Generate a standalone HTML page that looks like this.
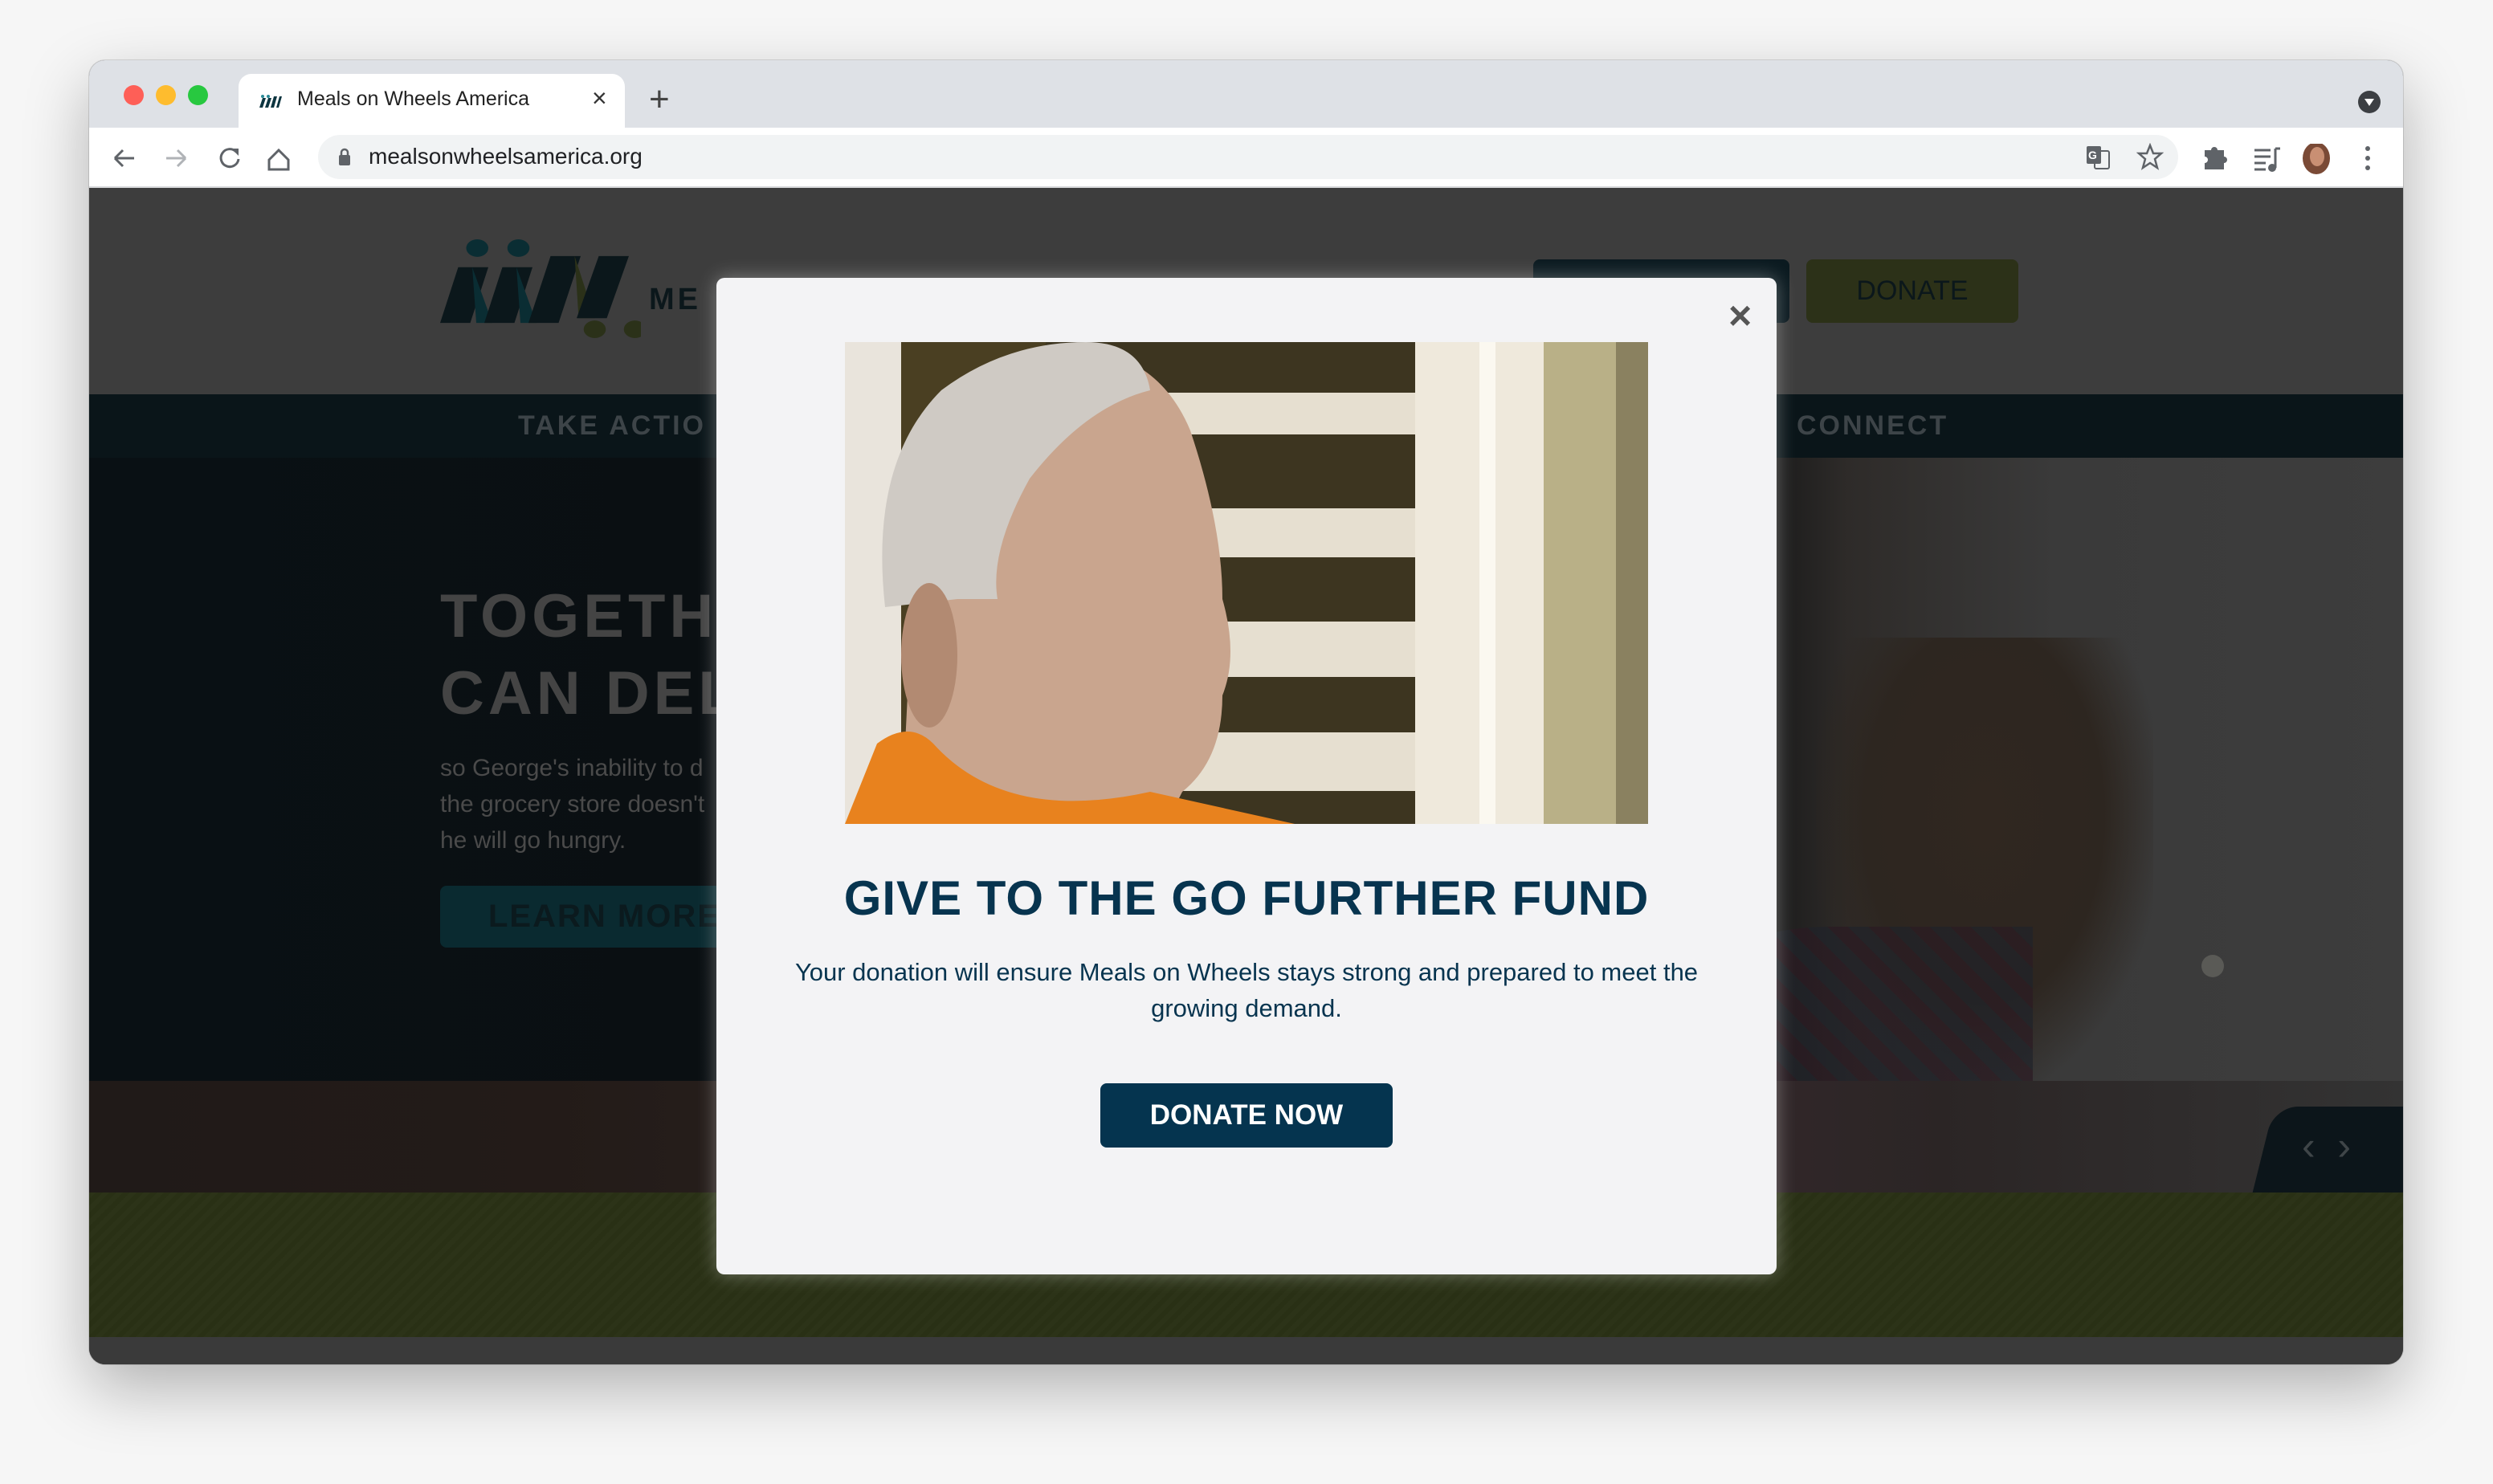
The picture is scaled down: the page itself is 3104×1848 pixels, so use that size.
<!DOCTYPE html>
<html><head><meta charset="utf-8">
<style>
*{margin:0;padding:0;box-sizing:border-box}
body{width:3104px;height:1848px;background:#f6f6f6;font-family:"Liberation Sans",sans-serif;position:relative;overflow:hidden}
.win{position:absolute;left:111px;top:75px;width:2881px;height:1624px;border-radius:20px;overflow:hidden;box-shadow:0 30px 80px rgba(0,0,0,.28),0 0 0 1px rgba(0,0,0,.12);background:#3c3c3c}
.tabbar{position:absolute;left:0;top:0;width:100%;height:84px;background:#dee1e6}
.dot{position:absolute;top:31px;width:25px;height:25px;border-radius:50%}
.tab{position:absolute;left:186px;top:17px;width:481px;height:68px;background:#fff;border-radius:16px 16px 0 0}
.toolbar{position:absolute;left:0;top:84px;width:100%;height:75px;background:#fff;border-bottom:2px solid #d7d8db}
.omni{position:absolute;left:285px;top:9px;width:2316px;height:55px;background:#f1f3f4;border-radius:28px}
.abs{position:absolute}
.content{position:absolute;left:0;top:159px;width:100%;height:1465px;background:#3d3d3d}
</style></head><body>
<div class="win">
 <div class="tabbar">
  <div class="dot" style="left:43px;background:#fe5f57"></div>
  <div class="dot" style="left:83px;background:#febc2e"></div>
  <div class="dot" style="left:123px;background:#28c840"></div>
  <div class="tab">
   <svg class="abs" style="left:24px;top:26px" width="30" height="16" viewBox="0 0 30 16"><path d="M2 16L6 4h4L6 16zM9 16l4-12h4l-4 12zM16 16l4-14h4l-4 14zM23 16l4-14h3l-4 14z" fill="#0d3540"/><circle cx="6" cy="2" r="2" fill="#2a8a96"/><circle cx="13" cy="2" r="2" fill="#2a8a96"/></svg>
   <div class="abs" style="left:73px;top:17px;font-size:25px;color:#222">Meals on Wheels America</div>
   <div class="abs" style="left:440px;top:12px;font-size:32px;color:#333">×</div>
  </div>
  <div class="abs" style="left:697px;top:24px;font-size:44px;color:#444;font-weight:300">+</div>
  <div class="abs" style="left:2825px;top:38px;width:28px;height:28px;border-radius:50%;background:#3c3f43"><svg width="28" height="28"><path d="M8 10h12l-6 9z" fill="#fff"/></svg></div>
 </div>
 <div class="toolbar">
  <svg class="abs" style="left:28px;top:20px" width="300" height="36" viewBox="0 0 300 36" fill="none" stroke-width="3">
   <path d="M4 18h24M4 18l10-10M4 18l10 10" stroke="#5f6368"/>
   <path d="M92 18h-24M92 18l-10-10M92 18l-10 10" stroke="#b0b3b7"/>
   <path d="M155 10a11 11 0 1 0 3 9" stroke="#5f6368"/><path d="M149 6h9v9z" fill="#5f6368" stroke="none"/>
   <path d="M196 20l12-12 12 12v12h-24z" stroke="#5f6368"/>
  </svg>
  <div class="omni">
   <svg class="abs" style="left:25px;top:15px" width="16" height="24"><rect x="1" y="10" width="14" height="13" rx="2" fill="#5f6368"/><path d="M4 10V7a4 4 0 0 1 8 0v3" stroke="#5f6368" stroke-width="2.5" fill="none"/></svg>
   <div class="abs" style="left:63px;top:11px;font-size:28px;color:#202124">mealsonwheelsamerica.org</div>
   <svg class="abs" style="left:2200px;top:12px" width="34" height="32"><rect x="2" y="2" width="18" height="22" rx="2" fill="#5f6368"/><rect x="12" y="8" width="18" height="22" rx="2" fill="none" stroke="#5f6368" stroke-width="2"/><text x="4" y="18" font-size="14" fill="#fff" font-family="Liberation Sans" font-weight="bold">G</text></svg>
   <svg class="abs" style="left:2264px;top:10px" width="34" height="34"><path d="M17 3l4 10h10l-8 7 3 11-9-6-9 6 3-11-8-7h10z" fill="none" stroke="#5f6368" stroke-width="2.5"/></svg>
  </div>
  <svg class="abs" style="left:2630px;top:20px" width="340" height="40">
   <path d="M4 12h8a4 4 0 0 1 8 0h8v8a4 4 0 0 1 0 8v8H4v-8a4 4 0 0 0 0-8z" fill="#5f6368" transform="translate(0,-4)"/>
   <path d="M66 8h20M66 16h20M66 24h14M66 32h14" stroke="#5f6368" stroke-width="3"/><path d="M92 6v24" stroke="#5f6368" stroke-width="3"/><circle cx="88" cy="30" r="5" fill="#5f6368"/><path d="M92 6h6" stroke="#5f6368" stroke-width="3"/>
   <ellipse cx="143" cy="18" rx="17" ry="20" fill="#7a4a36"/><ellipse cx="144" cy="16" rx="9" ry="12" fill="#c98f73"/>
   <circle cx="207" cy="6" r="3" fill="#5f6368"/><circle cx="207" cy="18" r="3" fill="#5f6368"/><circle cx="207" cy="30" r="3" fill="#5f6368"/>
  </svg>
 </div>
 <div class="content">
  <svg class="abs" style="left:437px;top:63px" width="250" height="125" viewBox="548 294 200 126" preserveAspectRatio="none">
   <circle cx="585" cy="306" r="11" fill="#0a2d33"/><circle cx="626" cy="306" r="11" fill="#0a2d33"/>
   <path d="M548 400l18-70h30l-18 70z" fill="#0b171b"/>
   <path d="M580 330l20 70h-16z" fill="#0a2d33"/>
   <path d="M592 400l18-70h30l-18 70z" fill="#0b171b"/>
   <path d="M624 330l20 70h-16z" fill="#0a2d33"/>
   <path d="M636 400l22-84h30l-22 84z" fill="#0b171b"/>
   <path d="M682 316l20 78h-16z" fill="#2b3119"/>
   <path d="M684 394l22-78h30l-22 78z" fill="#0b171b"/>
   <circle cx="702" cy="408" r="11" fill="#2b3119"/><circle cx="742" cy="408" r="11" fill="#2b3119"/>
  </svg>
  <div class="abs" style="left:697px;top:118px;font-size:38px;font-weight:bold;color:#0b171b;letter-spacing:4px">ME</div>
  <div class="abs" style="left:1798px;top:89px;width:319px;height:79px;background:#0b1a20;border-radius:8px"></div>
  <div class="abs" style="left:2138px;top:89px;width:264px;height:79px;background:#2c3118;border-radius:8px;color:#0b171b;font-size:34px;text-align:center;line-height:79px">DONATE</div>
  <div class="abs" style="left:0;top:257px;width:100%;height:79px;background:#0a1519"></div>
  <div class="abs" style="left:534px;top:277px;font-size:34px;color:#3d4448;letter-spacing:3px;font-weight:bold">TAKE ACTIO</div>
  <div class="abs" style="left:2126px;top:277px;font-size:34px;color:#3d4448;letter-spacing:3px;font-weight:bold">CONNECT</div>
  <div class="abs" style="left:0;top:336px;width:100%;height:776px;background:linear-gradient(90deg,#091014 0%,#0a0f12 30%,#0b0e10 70%,#2e2b29 76%,#3a3a3a 85%,#3d3d3d 100%)"></div>
  <div class="abs" style="left:2150px;top:560px;width:420px;height:552px;background:radial-gradient(ellipse at 50% 40%,#302720 0%,#2d2620 50%,rgba(60,60,60,0) 75%)"></div>
  <div class="abs" style="left:2000px;top:920px;width:420px;height:192px;background:repeating-linear-gradient(45deg,#2a1a22 0 18px,#1f2229 18px 36px);opacity:.7;border-radius:40% 0 0 0"></div>
  <div class="abs" style="left:2630px;top:955px;width:28px;height:28px;border-radius:50%;background:#5a5a56"></div>
  <div class="abs" style="left:437px;top:486px;font-size:76px;line-height:96px;color:#444;font-weight:bold;letter-spacing:5px">TOGETH<br>CAN DEL</div>
  <div class="abs" style="left:437px;top:700px;font-size:30px;line-height:45px;color:#4a4a4a">so George's inability to d<br>the grocery store doesn't<br>he will go hungry.</div>
  <div class="abs" style="left:437px;top:869px;width:400px;height:77px;background:#0a2a30;border-radius:8px;color:#0b1a1e;font-size:40px;font-weight:bold;line-height:77px;padding-left:60px;letter-spacing:2px">LEARN MORE</div>
  <div class="abs" style="left:0;top:1112px;width:100%;height:139px;background:linear-gradient(90deg,#201a18,#231b18 20%,#2a2220 40%,#3b2a30 60%,#2b2525 80%,#333)"></div>
  <div class="abs" style="left:2707px;top:1144px;width:200px;height:107px;background:#0c151a;border-radius:30px 0 0 0;transform:skewX(-14deg)"></div>
  <div class="abs" style="left:2885px;top:1144px;width:100px;height:107px;background:#0c151a"></div>
  <div class="abs" style="left:2755px;top:1164px;font-size:50px;color:#3f4548">‹&nbsp;&nbsp;›</div>
  <div class="abs" style="left:0;top:1251px;width:100%;height:180px;background:repeating-linear-gradient(135deg,#2c3318 0 6px,#293015 6px 12px)"></div>
  <div class="abs" style="left:0;top:1431px;width:100%;height:40px;background:#3a3a3a"></div>
 </div>
</div>
<div class="abs" style="left:892px;top:346px;width:1320px;height:1241px;background:#f3f3f5;border-radius:10px;box-shadow:0 0 24px rgba(255,255,255,.35)">
 <div class="abs" style="left:1260px;top:18px;font-size:50px;color:#555;font-weight:bold">×</div>
 <svg class="abs" style="left:160px;top:80px" width="1000" height="600" viewBox="0 0 1000 600">
  <rect width="1000" height="600" fill="#4a3f22"/>
  <rect x="250" y="0" width="460" height="600" fill="#3d3520"/>
  <g fill="#e6dfd0"><rect x="380" y="63" width="330" height="52"/><rect x="380" y="207" width="330" height="61"/><rect x="380" y="348" width="330" height="69"/><rect x="380" y="486" width="330" height="73"/></g>
  <rect x="0" y="0" width="70" height="600" fill="#e9e4dc"/>
  <rect x="710" y="0" width="160" height="600" fill="#efe9dc"/>
  <rect x="790" y="0" width="20" height="600" fill="#fbf8f0"/>
  <rect x="870" y="0" width="130" height="600" fill="#b9b087"/>
  <rect x="960" y="0" width="40" height="600" fill="#8a8160"/>
  <path d="M70 600L90 200Q100 40 230 10Q380 -10 430 110Q470 230 470 320Q490 390 470 440Q470 520 420 560L400 600z" fill="#c9a58e"/>
  <path d="M50 330Q30 150 120 60Q200 0 300 0Q370 0 380 60Q300 80 230 170Q180 260 190 320L140 320Z" fill="#cfcac4"/>
  <ellipse cx="105" cy="390" rx="35" ry="90" fill="#b28a72"/>
  <path d="M0 600L40 500Q80 470 110 500Q200 600 380 560L560 600z" fill="#e8821e"/>
 </svg>
 <div class="abs" style="left:0;top:738px;width:100%;text-align:center;font-size:60px;font-weight:bold;color:#07344f;letter-spacing:1px">GIVE TO THE GO FURTHER FUND</div>
 <div class="abs" style="left:80px;top:842px;width:1160px;text-align:center;font-size:31px;line-height:45px;color:#07344f">Your donation will ensure Meals on Wheels stays strong and prepared to meet the growing demand.</div>
 <div class="abs" style="left:478px;top:1003px;width:364px;height:80px;background:#05344f;border-radius:8px;color:#fff;font-size:35px;font-weight:bold;text-align:center;line-height:80px">DONATE NOW</div>
</div>
</body></html>
